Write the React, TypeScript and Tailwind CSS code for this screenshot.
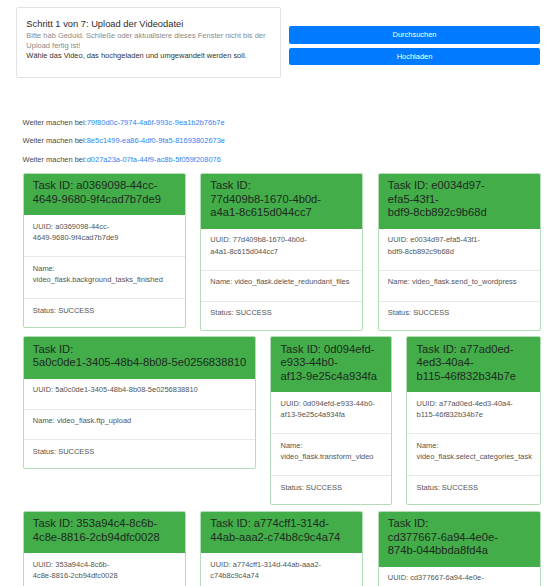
// header and uuid lines are split where the original page wrapped them
const tasks = [
  {
    head: 'Task ID: a0369098-44cc-|4649-9680-9f4cad7b7de9',
    uuid: 'UUID: a0369098-44cc-|4649-9680-9f4cad7b7de9',
    name: 'video_flask.background_tasks_finished',
    w: 'w-[163px]',
  },
  {
    head: 'Task ID:|77d409b8-1670-4b0d-|a4a1-8c615d044cc7',
    uuid: 'UUID: 77d409b8-1670-4b0d-|a4a1-8c615d044cc7',
    name: 'video_flask.delete_redundant_files',
    w: 'w-[163px]',
  },
  {
    head: 'Task ID: e0034d97-|efa5-43f1-|bdf9-8cb892c9b68d',
    uuid: 'UUID: e0034d97-efa5-43f1-|bdf9-8cb892c9b68d',
    name: 'video_flask.send_to_wordpress',
    w: 'w-[163px]',
  },
  {
    head: 'Task ID:|5a0c0de1-3405-48b4-8b08-5e0256838810',
    uuid: 'UUID: 5a0c0de1-3405-48b4-8b08-5e0256838810',
    name: 'video_flask.ftp_upload',
    w: 'w-[233.4px]',
  },
  {
    head: 'Task ID: 0d094efd-|e933-44b0-|af13-9e25c4a934fa',
    uuid: 'UUID: 0d094efd-e933-44b0-|af13-9e25c4a934fa',
    name: 'video_flask.transform_video',
    w: 'w-[121.7px]',
  },
  {
    head: 'Task ID: a77ad0ed-|4ed3-40a4-|b115-46f832b34b7e',
    uuid: 'UUID: a77ad0ed-4ed3-40a4-|b115-46f832b34b7e',
    name: 'video_flask.select_categories_task',
    w: 'w-[134.3px]',
  },
  {
    head: 'Task ID: 353a94c4-8c6b-|4c8e-8816-2cb94dfc0028',
    uuid: 'UUID: 353a94c4-8c6b-|4c8e-8816-2cb94dfc0028',
    name: 'video_flask.cleanup',
    w: 'w-[163px]',
  },
  {
    head: 'Task ID: a774cff1-314d-|44ab-aaa2-c74b8c9c4a74',
    uuid: 'UUID: a774cff1-314d-44ab-aaa2-|c74b8c9c4a74',
    name: 'video_flask.cleanup',
    w: 'w-[163px]',
  },
  {
    head: 'Task ID:|cd377667-6a94-4e0e-|874b-044bbda8fd4a',
    uuid: 'UUID: cd377667-6a94-4e0e-|874b-044bbda8fd4a',
    name: 'video_flask.cleanup',
    w: 'w-[163px]',
  },
];

const resume = [
  '79f80d0c-7974-4a6f-993c-9ea1b2b76b7e',
  '8e5c1499-ea86-4df0-9fa5-81693802673e',
  'd027a23a-07fa-44f9-ac8b-5f059f208076',
];

function Lines({ text }: { text: string }) {
  return (
    <>
      {text.split('|').map((line, i) => (
        <span key={i} className="block whitespace-nowrap">
          {line}
        </span>
      ))}
    </>
  );
}

function TaskCard({ task }: { task: (typeof tasks)[number] }) {
  return (
    <div className={`${task.w} shrink-0 border border-[#b3dcb7] rounded-[2px] overflow-hidden bg-white`}>
      <div className="bg-[#42ad49] px-[9.34px] pt-[5.6px] pb-[5.4px]">
        <h4 className="text-[11.2px] leading-[1.2] mb-[3.73px] text-[#1f2a21] font-normal">
          <Lines text={task.head} />
        </h4>
      </div>
      <div className="px-[9.34px] pt-[5.6px] pb-[5.6px]">
        <p className="text-[7.47px] leading-[1.5] mb-[7.47px] text-[#555]">
          <Lines text={task.uuid} />
        </p>
      </div>
      <div className="px-[9.34px] pt-[5.6px] pb-[5.6px] border-t border-[#e8e8e8]">
        <p className="text-[7.47px] leading-[1.5] mb-[7.47px] text-[#555]">Name: {task.name}</p>
      </div>
      <div className="px-[9.34px] pt-[5.6px] pb-[3.6px] border-t border-[#e8e8e8]">
        <p className="text-[7.47px] leading-[1.5] mb-[7.47px] text-[#555]">Status: SUCCESS</p>
      </div>
    </div>
  );
}

export default function App() {
  const rowsOfCards = [tasks.slice(0, 3), tasks.slice(3, 6), tasks.slice(6, 9)];
  return (
    <div className="min-h-screen bg-white font-['Liberation_Sans',Arial,sans-serif] text-[#212529]">
      <div className="flex items-start pt-[7px] pl-[16px]">
        <div className="w-[265px] border border-[#e2e2e2] rounded-[2px] px-[9.34px] pt-[10.6px] pb-[8px]">
          <h5 className="text-[9.34px] leading-[1.2] text-[#2b2b2b]">Schritt 1 von 7: Upload der Videodatei</h5>
          <p className="text-[7.47px] leading-[10px] mt-[1.5px] text-[#8a8a8a]">
            Bitte hab Geduld. Schließe oder aktualisiere dieses Fenster nicht bis der Upload fertig ist!
          </p>
          <p className="text-[7.47px] leading-[10px] mb-[7.47px] text-[#333]">
            Wähle das Video, das hochgeladen und umgewandelt werden soll.
          </p>
        </div>
        <div className="ml-[8px] w-[251px] pt-[19px] flex flex-col gap-[4px]">
          <button className="h-[17.6px] rounded-[2px] bg-[#007bff] text-white text-[7.47px]">Durchsuchen</button>
          <button className="h-[17.6px] rounded-[2px] bg-[#007bff] text-white text-[7.47px]">Hochladen</button>
        </div>
      </div>

      <div className="pl-[22.5px] mt-[39px]">
        {resume.map((id) => (
          <p key={id} className="text-[7.47px] leading-[1.5] mb-[7.47px] text-[#4a4a4a]">
            Weiter machen bei:<a className="text-[#2f86f6]">{id}</a>
          </p>
        ))}
      </div>

      <div className="ml-[22.5px] w-[518px] flex flex-col gap-[5.6px]">
        {rowsOfCards.map((row, r) => (
          <div key={r} className="flex items-start justify-between">
            {row.map((task) => (
              <TaskCard key={task.head} task={task} />
            ))}
          </div>
        ))}
      </div>
    </div>
  );
}
